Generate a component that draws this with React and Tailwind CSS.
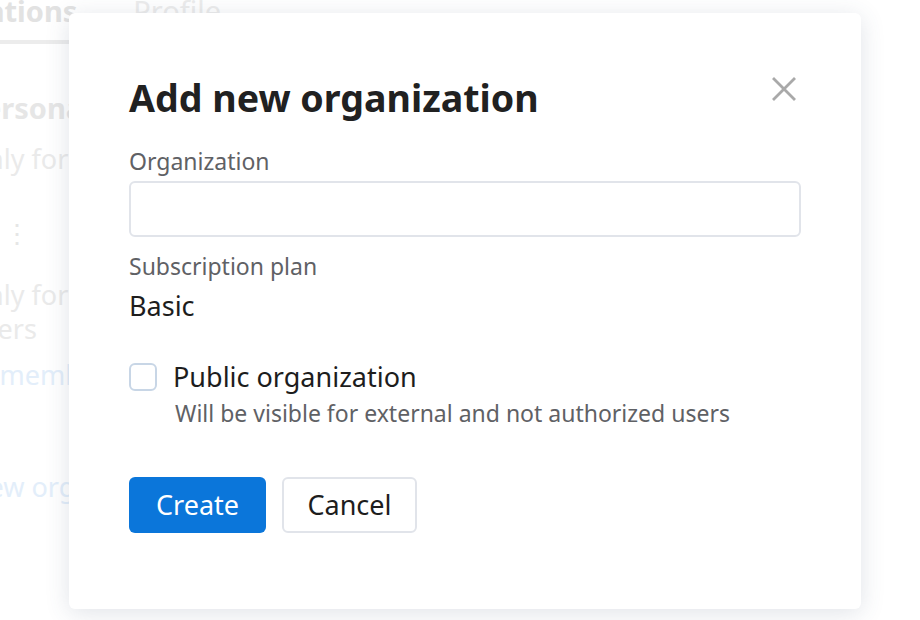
import React from "react";

export default function App() {
  return (
    <div className="relative w-[920px] h-[620px] overflow-hidden bg-white" style={{ fontFamily: '"Noto Sans", "Open Sans", sans-serif' }}>
      {/* background page (faded behind dialog) */}
      <div className="ml-[-110px] flex flex-col">
        <div className="flex items-end mt-[-14px] h-[58px] w-[340px] border-b-4 border-[#ececec]">
          <div className="ml-[-16px] text-[29px] font-bold text-[#e2e2e2] leading-[40px] pb-[9px]">Organizations</div>
          <div className="ml-[56px] text-[29px] text-[#ececec] leading-[40px] pb-[9px]">Profile</div>
        </div>
        <div className="mt-[46px] text-[29px] font-bold text-[#e6e6e6] leading-[36px] pl-[76px]">Personal</div>
        <div className="mt-[16px] text-[27px] text-[#eaeaea] leading-[34px] pl-[76px]">Only for</div>
        <div className="mt-[42px] text-[26px] text-[#e6e6e6] leading-[30px] pl-[114px]">⋮</div>
        <div className="mt-[30px] text-[27px] text-[#eaeaea] leading-[34px] pl-[76px]">Only for</div>
        <div className="text-[27px] text-[#eaeaea] leading-[34px] pl-[78px]">users</div>
        <div className="mt-[12px] text-[27px] text-[#e3eefa] leading-[34px] pl-[52px]">Add members</div>
        <div className="mt-[78px] text-[27px] text-[#e3eefa] leading-[34px] pl-[78px]">New organization</div>
      </div>

      {/* dialog */}
      <div className="absolute left-[69px] top-[13px] w-[792px] h-[596px] bg-white rounded-[6px] shadow-[0_4px_24px_rgba(60,80,110,0.16)] px-[60px] pt-[63px]">
        <button className="absolute right-[65px] top-[64px] w-[24px] h-[24px] flex items-center justify-center text-[#a9a9a9]">
          <svg width="24" height="24" viewBox="0 0 24 24" fill="none" stroke="currentColor" strokeWidth="2.8" strokeLinecap="square">
            <path d="M2 2L22 22M22 2L2 22" />
          </svg>
        </button>
        <h1 className="text-[37.6px] font-bold leading-[44px] text-[#212121]">Add new organization</h1>
        <div className="mt-[29px] text-[23px] leading-[24px] text-[#5f6165]">Organization</div>
        <input className="mt-[8px] block w-full h-[56px] rounded-[6px] border-2 border-[#e1e4ea] outline-none px-3 text-[22px]" />
        <div className="mt-[17px] text-[23px] leading-[24px] text-[#5f6165]">Subscription plan</div>
        <div className="mt-[14px] text-[27px] leading-[28px] text-[#1d1d1d]">Basic</div>
        <div className="mt-[43px] flex items-center gap-[16px]">
          <div className="w-[28px] h-[28px] rounded-[6px] border-2 border-[#c8d6e6] bg-white" />
          <div className="text-[27px] leading-[28px] text-[#1d1d1d]">Public organization</div>
        </div>
        <div className="mt-[10px] pl-[46px] text-[23px] leading-[24px] text-[#5f6165]">Will be visible for external and not authorized users</div>
        <div className="mt-[52px] flex gap-[16px]">
          <button className="w-[137px] h-[56px] rounded-[6px] bg-[#0b76da] text-white text-[27px] leading-[32px]">Create</button>
          <button className="w-[135px] h-[56px] rounded-[6px] border-2 border-[#e1e4ea] bg-white text-[#1d1d1d] text-[27px] leading-[32px]">Cancel</button>
        </div>
      </div>
    </div>
  );
}
